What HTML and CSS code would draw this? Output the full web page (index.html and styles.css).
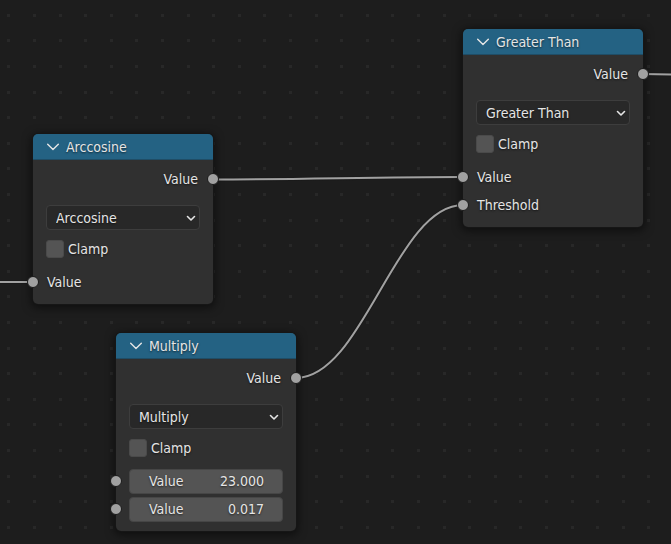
FILE: index.html
```html
<!DOCTYPE html>
<html lang="en">
<head>
<meta charset="utf-8">
<title>Node editor</title>
<link rel="stylesheet" href="styles.css">
</head>
<body>
<main class="canvas">
  <svg class="wires" aria-hidden="true">
    <defs>
      <pattern id="grid" x="7" y="14" width="128" height="128" patternUnits="userSpaceOnUse">
        <path class="dot" d="M0 0h3v3H0zM26 0h3v3h-3zM52 0h3v3h-3zM77 0h3v3h-3zM103 0h3v3h-3z
          M0 25h3v3H0zM26 25h3v3h-3zM52 25h3v3h-3zM77 25h3v3h-3zM103 25h3v3h-3z
          M0 51h3v3H0zM26 51h3v3h-3zM52 51h3v3h-3zM77 51h3v3h-3zM103 51h3v3h-3z
          M0 77h3v3H0zM26 77h3v3h-3zM52 77h3v3h-3zM77 77h3v3h-3zM103 77h3v3h-3z
          M0 102h3v3H0zM26 102h3v3h-3zM52 102h3v3h-3zM77 102h3v3h-3zM103 102h3v3h-3z"/>
      </pattern>
    </defs>
    <rect width="100%" height="100%" fill="url(#grid)"/>
    <g class="wire-outline">
      <path d="M0 282H33"/>
      <path d="M213 179.5C300 179.5 376 177 463 177"/>
      <path d="M296 378C363 378 396 205 463 205"/>
      <path d="M642 74L671 74.5H2000"/>
    </g>
    <g class="wire">
      <path d="M0 282H33"/>
      <path d="M213 179.5C300 179.5 376 177 463 177"/>
      <path d="M296 378C363 378 396 205 463 205"/>
      <path d="M642 74L671 74.5H2000"/>
    </g>
  </svg>

  <section class="node node-arccosine">
    <header class="node-header">
      <button class="collapse" type="button" aria-label="Collapse Arccosine"><svg viewBox="0 0 12 8"><path d="M.7 1.200L6 6.500l5.300-5.300"/></svg></button>
      <h2>Arccosine</h2>
    </header>
    <div class="node-body">
      <div class="row output">Value<span class="socket"></span></div>
      <div class="dropdown">
        <select aria-label="Arccosine operation"><option>Arccosine</option></select>
        <svg viewBox="0 0 10 7"><path d="M1.500 1.500L5 5l3.500-3.500"/></svg>
      </div>
      <label class="row clamp"><input type="checkbox">Clamp</label>
      <div class="row input">Value<span class="socket"></span></div>
    </div>
  </section>

  <section class="node node-greater">
    <header class="node-header">
      <button class="collapse" type="button" aria-label="Collapse Greater Than"><svg viewBox="0 0 12 8"><path d="M.7 1.200L6 6.500l5.300-5.300"/></svg></button>
      <h2>Greater Than</h2>
    </header>
    <div class="node-body">
      <div class="row output">Value<span class="socket"></span></div>
      <div class="dropdown">
        <select aria-label="Greater Than operation"><option>Greater Than</option></select>
        <svg viewBox="0 0 10 7"><path d="M1.500 1.500L5 5l3.500-3.500"/></svg>
      </div>
      <label class="row clamp"><input type="checkbox">Clamp</label>
      <div class="row input">Value<span class="socket"></span></div>
      <div class="row input">Threshold<span class="socket"></span></div>
    </div>
  </section>

  <section class="node node-multiply">
    <header class="node-header">
      <button class="collapse" type="button" aria-label="Collapse Multiply"><svg viewBox="0 0 12 8"><path d="M.7 1.200L6 6.500l5.300-5.300"/></svg></button>
      <h2>Multiply</h2>
    </header>
    <div class="node-body">
      <div class="row output">Value<span class="socket"></span></div>
      <div class="dropdown">
        <select aria-label="Multiply operation"><option>Multiply</option></select>
        <svg viewBox="0 0 10 7"><path d="M1.500 1.500L5 5l3.500-3.500"/></svg>
      </div>
      <label class="row clamp"><input type="checkbox">Clamp</label>
      <div class="row input"><label class="field">Value<input type="text" value="23.000"></label><span class="socket"></span></div>
      <div class="row input"><label class="field">Value<input type="text" value="0.017"></label><span class="socket"></span></div>
    </div>
  </section>
</main>
</body>
</html>
```
FILE: styles.css
```css
* {
  box-sizing: border-box;
}

body {
  margin: 0;
  background: #1d1d1d;
  color: #e5e5e5;
  font: 14px/20px "DejaVu Sans Condensed", "Noto Sans", sans-serif;
  text-shadow: 0 1px 2px rgba(0, 0, 0, 0.6);
}

.canvas {
  position: relative;
  height: 100vh;
  overflow: hidden;
}

.wires {
  display: block;
  width: 100%;
  height: 100%;
}

.dot {
  fill: #282828;
}

.wire,
.wire-outline {
  fill: none;
  stroke: #a1a1a1;
  stroke-width: 2;
}

.wire-outline {
  stroke: #1a1a1a;
  stroke-width: 4;
}

.node {
  position: absolute;
  width: 180px;
  border-radius: 5px;
  background: #303030;
  box-shadow: 0 0 0 1px #161616, 0 2px 8px 2px rgba(0, 0, 0, 0.5);
}

.node-arccosine {
  left: 33px;
  top: 134px;
}

.node-greater {
  left: 463px;
  top: 29px;
}

.node-multiply {
  left: 116px;
  top: 333px;
}

.node-header {
  display: flex;
  align-items: center;
  gap: 7px;
  height: 26px;
  padding: 0 14px;
  border-radius: 5px 5px 0 0;
  border-bottom: 1px solid #1f4d66;
  background: #246283;
}

.node-header h2 {
  margin: 0;
  font: inherit;
}

button,
select,
input {
  margin: 0;
  border: 0;
  background: none;
  color: inherit;
  font: inherit;
  text-shadow: inherit;
}

svg path {
  stroke-linecap: round;
  stroke-linejoin: round;
}

.collapse {
  display: flex;
  padding: 0;
}

.collapse svg {
  width: 12px;
  height: 8px;
  fill: none;
  stroke: #e5e5e5;
  stroke-width: 1.4;
}

.node-body {
  padding: 5px 13px 8px;
}

.row {
  position: relative;
  display: flex;
  align-items: center;
  height: 28px;
}

.output {
  justify-content: flex-end;
  padding-right: 2px;
  margin-bottom: 12px;
}

.input {
  padding-left: 1px;
}

.input:has(.field) {
  padding: 0;
}

.socket {
  position: absolute;
  left: -19px;
  width: 12px;
  height: 12px;
  border: 1px solid #1a1a1a;
  border-radius: 50%;
  background: #a1a1a1;
}

.output .socket {
  right: -19px;
  left: auto;
}

.dropdown {
  position: relative;
}

.dropdown select {
  display: block;
  width: 100%;
  height: 25px;
  padding: 0 9px;
  appearance: none;
  border: 1px solid #3d3d3d;
  border-radius: 4px;
  background: #282828;
}

.dropdown svg {
  position: absolute;
  right: 4px;
  top: 10px;
  width: 10px;
  height: 7px;
  fill: none;
  stroke: #e5e5e5;
  stroke-width: 1.6;
  pointer-events: none;
}

.clamp {
  gap: 4px;
  margin: 5px 0;
}

.clamp input {
  width: 18px;
  height: 18px;
  appearance: none;
  border: 1px solid #4a4a4a;
  border-radius: 3px;
  background: #545454;
}

.field {
  display: flex;
  align-items: center;
  width: 100%;
  height: 25px;
  padding: 0 18px 0 19px;
  border: 1px solid #464646;
  border-radius: 4px;
  background: #545454;
}

.field input {
  flex: 1;
  min-width: 0;
  padding: 0;
  text-align: right;
}
```
